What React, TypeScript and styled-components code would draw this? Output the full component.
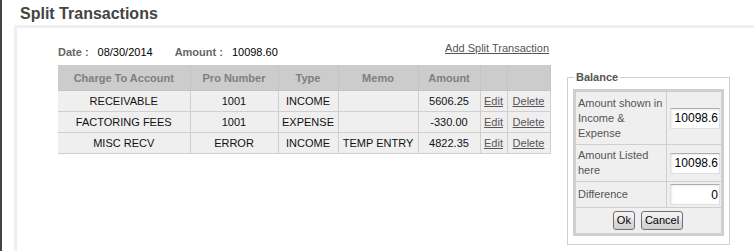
import React from "react";
import styled, { createGlobalStyle } from "styled-components";

const GlobalStyle = createGlobalStyle`
  html, body { margin: 0; padding: 0; background: #fff; }
  body { font-family: "Liberation Sans", Arial, sans-serif; }
`;

const Page = styled.div`
  height: 251px;
  border-left: 2px solid #444;
  box-sizing: border-box;
  overflow: hidden;
`;

const Title = styled.h1`
  margin: 0;
  padding: 4px 0 0 18px;
  height: 21px;
  font-size: 16px;
  line-height: 19px;
  font-weight: bold;
  color: #444;
`;

const Panel = styled.div`
  margin-left: 12px;
  border-top: 3px solid #efefef;
  border-left: 3px solid #efefef;
  display: flex;
  align-items: flex-start;
  height: 230px;
`;

const LeftCol = styled.div`
  padding-left: 41px;
  width: 491px;
`;

const TopRow = styled.div`
  display: flex;
  justify-content: space-between;
  align-items: flex-start;
  height: 37px;
  box-sizing: border-box;
  padding-top: 14px;
`;

const Info = styled.div`
  margin-top: 4px;
  font-size: 11px;
  line-height: 13px;
  display: flex;
`;

const Label = styled.span<{ $gap?: number }>`
  font-weight: bold;
  color: #666;
  margin-left: ${(p) => p.$gap ?? 0}px;
  margin-right: 9px;
`;

const Value = styled.span`
  color: #000;
`;

const Link = styled.a`
  font-size: 11px;
  line-height: 13px;
  color: #555;
  text-decoration: underline;
  cursor: pointer;
`;

const Grid = styled.table`
  border-collapse: collapse;
  table-layout: fixed;
  width: 492px;
  font-size: 11px;
`;

const Th = styled.th`
  background: #cccccc;
  color: #7f7f7f;
  font-weight: bold;
  height: 25px;
  padding: 0;
  border: 1px solid #c4c4c4;
  border-top: none;
  border-left: none;
  text-align: center;
  font-size: 11px;
`;

const Td = styled.td`
  background: #efefef;
  color: #111;
  height: 20px;
  padding: 0;
  border: 1px solid #cfcfcf;
  text-align: center;
  &:first-child { border-left: none; }
`;

const Fieldset = styled.fieldset`
  margin: 43px 0 0 18px;
  padding: 5px 5px 8px 5px;
  border: 1px solid #cfcfcf;
  width: 151px;
  min-width: 0;
`;

const Legend = styled.legend`
  font-size: 11px;
  font-weight: bold;
  color: #555;
  padding: 0 2px;
  margin-left: 1px;
  line-height: 13px;
`;

const BalanceTable = styled.table`
  border-collapse: collapse;
  table-layout: fixed;
  width: 151px;
  border: 3px solid #cfcfcf;
  font-size: 11px;
`;

const BTd = styled.td<{ $h: number; $align?: string }>`
  background: #efefef;
  border: 1px solid #cfcfcf;
  height: ${(p) => p.$h}px;
  padding: 0 1px 0 2px;
  color: #555;
  line-height: 15px;
  text-align: ${(p) => p.$align ?? "left"};
  vertical-align: middle;
`;

const NumInput = styled.input`
  width: 50px;
  height: 21px;
  box-sizing: border-box;
  border: 1px solid #dbdfe6;
  border-top-color: #abadb3;
  background: #fff;
  box-shadow: inset 1px 1px 2px rgba(0, 0, 0, 0.08);
  text-align: right;
  font-family: "Liberation Sans", Arial, sans-serif;
  font-size: 12px;
  padding: 0 1px 0 0;
  color: #000;
  vertical-align: middle;
`;

const Buttons = styled.div`
  display: flex;
  justify-content: center;
  gap: 6px;
  padding-right: 2px;
`;

const Btn = styled.button`
  height: 19px;
  padding: 0 3px;
  border: 1px solid #707070;
  border-radius: 3px;
  background: linear-gradient(#f2f2f2, #ebebeb 50%, #dddddd 50%, #cfcfcf);
  font-family: "Liberation Sans", Arial, sans-serif;
  font-size: 11px;
  color: #000;
  line-height: 17px;
`;

const rows = [
  { acc: "RECEIVABLE", pro: "1001", type: "INCOME", memo: "", amt: "5606.25" },
  { acc: "FACTORING FEES", pro: "1001", type: "EXPENSE", memo: "", amt: "-330.00" },
  { acc: "MISC RECV", pro: "ERROR", type: "INCOME", memo: "TEMP ENTRY", amt: "4822.35" },
];

const widths = [132, 88, 60, 80, 62, 27, 43];

export default function App() {
  return (
    <Page>
      <GlobalStyle />
      <Title>Split Transactions</Title>
      <Panel>
        <LeftCol>
          <TopRow>
            <Info>
              <Label>Date :</Label>
              <Value>08/30/2014</Value>
              <Label $gap={22}>Amount :</Label>
              <Value>10098.60</Value>
            </Info>
            <Link>Add Split Transaction</Link>
          </TopRow>
          <Grid>
            <colgroup>
              {widths.map((w, i) => (
                <col key={i} style={{ width: w }} />
              ))}
            </colgroup>
            <thead>
              <tr>
                <Th>Charge To Account</Th>
                <Th>Pro Number</Th>
                <Th>Type</Th>
                <Th>Memo</Th>
                <Th>Amount</Th>
                <Th></Th>
                <Th></Th>
              </tr>
            </thead>
            <tbody>
              {rows.map((r) => (
                <tr key={r.acc}>
                  <Td>{r.acc}</Td>
                  <Td>{r.pro}</Td>
                  <Td>{r.type}</Td>
                  <Td>{r.memo}</Td>
                  <Td>{r.amt}</Td>
                  <Td>
                    <Link>Edit</Link>
                  </Td>
                  <Td>
                    <Link>Delete</Link>
                  </Td>
                </tr>
              ))}
            </tbody>
          </Grid>
        </LeftCol>
        <Fieldset>
          <Legend>Balance</Legend>
          <BalanceTable>
            <colgroup>
              <col style={{ width: 92 }} />
              <col style={{ width: 56 }} />
            </colgroup>
            <tbody>
              <tr>
                <BTd $h={52}>Amount shown in Income &amp; Expense</BTd>
                <BTd $h={52} $align="right">
                  <NumInput defaultValue="10098.6" />
                </BTd>
              </tr>
              <tr>
                <BTd $h={36}>Amount Listed here</BTd>
                <BTd $h={36} $align="right">
                  <NumInput defaultValue="10098.6" />
                </BTd>
              </tr>
              <tr>
                <BTd $h={25}>Difference</BTd>
                <BTd $h={25} $align="right">
                  <NumInput defaultValue="0" />
                </BTd>
              </tr>
              <tr>
                <BTd $h={25} colSpan={2}>
                  <Buttons>
                    <Btn>Ok</Btn>
                    <Btn>Cancel</Btn>
                  </Buttons>
                </BTd>
              </tr>
            </tbody>
          </BalanceTable>
        </Fieldset>
      </Panel>
    </Page>
  );
}
